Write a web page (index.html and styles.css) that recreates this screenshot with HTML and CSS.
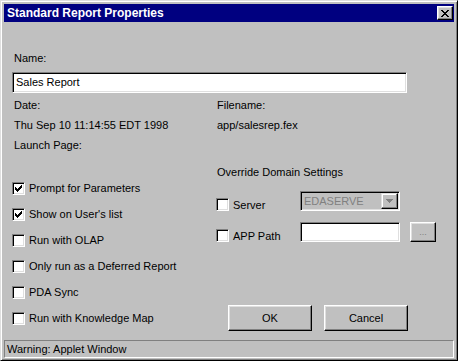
FILE: index.html
```html
<!DOCTYPE html>
<html lang="en">
<head>
    <meta charset="UTF-8">
    <meta name="viewport" content="width=device-width, initial-scale=1.0">
    <title>Standard Report Properties</title>
    <link rel="stylesheet" href="styles.css">
</head>
<body>

    <div class="window">
        <div class="titlebar">
            <span class="title">Standard Report Properties</span>
            <div class="close-btn">
                <svg width="8" height="7" viewBox="0 0 8 7" shape-rendering="crispEdges">
                    <path d="M0 0h2v1h-2z M6 0h2v1h-2z M1 1h2v1h-2z M5 1h2v1h-2z M2 2h4v1h-4z M3 3h2v1h-2z M2 4h4v1h-4z M1 5h2v1h-2z M5 5h2v1h-2z M0 6h2v1h-2z M6 6h2v1h-2z" fill="#000"/>
                </svg>
            </div>
        </div>

        <div class="client">
            <div class="name-label">Name:</div>
            <div class="field name-field">Sales Report</div>

            <div class="columns">
                <div class="col-left">
                    <div class="row">Date:</div>
                    <div class="row">Thu Sep 10 11:14:55 EDT 1998</div>
                    <div class="row">Launch Page:</div>

                    <div class="checks">
                        <div class="check-row"><span class="checkbox"><svg width="13" height="13" viewBox="0 0 13 13" shape-rendering="crispEdges"><path d="M2 4h1v3h-1z M3 5h1v3h-1z M4 6h1v3h-1z M5 5h1v3h-1z M6 4h1v3h-1z M7 3h1v3h-1z M8 2h1v3h-1z" fill="#000" transform="translate(1 1)"/></svg></span>Prompt for Parameters</div>
                        <div class="check-row"><span class="checkbox"><svg width="13" height="13" viewBox="0 0 13 13" shape-rendering="crispEdges"><path d="M2 4h1v3h-1z M3 5h1v3h-1z M4 6h1v3h-1z M5 5h1v3h-1z M6 4h1v3h-1z M7 3h1v3h-1z M8 2h1v3h-1z" fill="#000" transform="translate(1 1)"/></svg></span>Show on User's list</div>
                        <div class="check-row"><span class="checkbox"></span>Run with OLAP</div>
                        <div class="check-row"><span class="checkbox"></span>Only run as a Deferred Report</div>
                        <div class="check-row"><span class="checkbox"></span>PDA Sync</div>
                        <div class="check-row"><span class="checkbox"></span>Run with Knowledge Map</div>
                    </div>
                </div>

                <div class="col-right">
                    <div class="row">Filename:</div>
                    <div class="row">app/salesrep.fex</div>
                    <div class="row override">Override Domain Settings</div>

                    <div class="option-row server-row">
                        <div class="option-label"><span class="checkbox"></span>Server</div>
                        <div class="combo">
                            <span class="combo-text">EDASERVE</span>
                            <span class="combo-btn">
                                <svg width="7" height="4" viewBox="0 0 7 4" shape-rendering="crispEdges">
                                    <path d="M0 0h7v1h-7z M1 1h5v1h-5z M2 2h3v1h-3z M3 3h1v1h-1z" fill="#808080"/>
                                </svg>
                            </span>
                        </div>
                    </div>

                    <div class="option-row path-row">
                        <div class="option-label"><span class="checkbox"></span>APP Path</div>
                        <div class="field path-field"></div>
                        <div class="btn browse-btn">...</div>
                    </div>

                    <div class="button-row">
                        <div class="btn action-btn">OK</div>
                        <div class="btn action-btn">Cancel</div>
                    </div>
                </div>
            </div>
        </div>

        <div class="statusbar">Warning: Applet Window</div>
    </div>

</body>
</html>
```

FILE: styles.css
```css
body {
    margin: 0;
    font-family: "Liberation Sans", Arial, sans-serif;
    font-size: 11px;
    color: #000;
    background-color: #c0c0c0;
}
.window {
    width: 458px;
    height: 361px;
    box-sizing: border-box;
    padding: 3px 3px 2px 3px;
    background: #c0c0c0;
    border: 1px solid;
    border-color: #dfdfdf #000 #000 #dfdfdf;
    box-shadow: inset 1px 1px #fff, inset -1px -1px #808080;
}
.titlebar {
    height: 18px;
    background: #000080;
    display: flex;
    align-items: center;
    justify-content: space-between;
    padding-left: 3px;
}
.title {
    color: #fff;
    font-weight: bold;
    font-size: 12px;
}
.close-btn {
    width: 16px;
    height: 14px;
    box-sizing: border-box;
    margin-right: 1px;
    background: #c0c0c0;
    border: 1px solid;
    border-color: #fff #000 #000 #fff;
    box-shadow: inset -1px -1px #808080, inset 1px 1px #dfdfdf;
    display: flex;
    align-items: center;
    justify-content: center;
}
.client {
    height: 318px;
    box-sizing: border-box;
    padding: 30px 0 0 8px;
}
.name-label {
    height: 13px;
    line-height: 13px;
    padding-left: 2px;
}
.field {
    box-sizing: border-box;
    height: 21px;
    background: #fff;
    border: 1px solid;
    border-color: #808080 #fff #fff #808080;
    box-shadow: inset 1px 1px #000, inset -1px -1px #dfdfdf;
}
.name-field {
    width: 395px;
    margin-top: 7px;
    padding-left: 3px;
    line-height: 19px;
}
.columns {
    display: flex;
    margin-top: 2px;
}
.col-left {
    width: 204px;
}
.col-right {
    flex: 1;
}
.row {
    height: 20px;
    line-height: 20px;
    padding-left: 2px;
    white-space: nowrap;
}
.col-right .row {
    padding-left: 1px;
}
.checks {
    margin-top: 20px;
}
.check-row {
    height: 26px;
    display: flex;
    align-items: center;
    white-space: nowrap;
}
.checkbox {
    width: 13px;
    height: 13px;
    box-sizing: border-box;
    flex-shrink: 0;
    margin-right: 4px;
    background: #fff;
    border: 1px solid;
    border-color: #808080 #fff #fff #808080;
    box-shadow: inset 1px 1px #000, inset -1px -1px #dfdfdf;
    position: relative;
}
.checkbox svg {
    position: absolute; /* check mark drawn over the box */
    left: -1px;
    top: -1px;
}
.override {
    margin-top: 27px;
}
.option-row {
    display: flex;
    align-items: center;
    height: 20px;
}
.server-row {
    margin-top: 9px;
}
.path-row {
    margin-top: 11px;
}
.option-label {
    width: 84px;
    display: flex;
    align-items: center;
    padding-top: 7px;
}
.combo {
    width: 100px;
    height: 20px;
    box-sizing: border-box;
    display: flex;
    align-items: center;
    background: #c0c0c0;
    border: 1px solid;
    border-color: #808080 #fff #fff #808080;
    box-shadow: inset 1px 1px #000, inset -1px -1px #dfdfdf;
    padding: 1px;
}
.combo-text {
    flex: 1;
    color: #808080;
    padding-left: 2px;
}
.combo-btn {
    width: 17px;
    height: 16px;
    box-sizing: border-box;
    border: 1px solid;
    border-color: #dfdfdf #000 #000 #dfdfdf;
    box-shadow: inset -1px -1px #808080, inset 1px 1px #fff;
    display: flex;
    align-items: center;
    justify-content: center;
}
.path-field {
    width: 100px;
    height: 20px;
}
.btn {
    box-sizing: border-box;
    background: #c0c0c0;
    border: 1px solid;
    border-color: #fff #000 #000 #fff;
    box-shadow: inset -1px -1px #808080, inset 1px 1px #dfdfdf;
    display: flex;
    align-items: center;
    justify-content: center;
}
.browse-btn {
    width: 26px;
    height: 20px;
    margin-left: 10px;
    color: #808080;
    font-size: 9px;
}
.button-row {
    display: flex;
    gap: 12px;
    margin-top: 63px;
    padding-left: 12px;
}
.action-btn {
    width: 84px;
    height: 26px;
}
.statusbar {
    height: 18px;
    box-sizing: border-box;
    border: 1px solid;
    border-color: #808080 #fff #fff #808080;
    padding-left: 2px;
    line-height: 16px;
}
```
